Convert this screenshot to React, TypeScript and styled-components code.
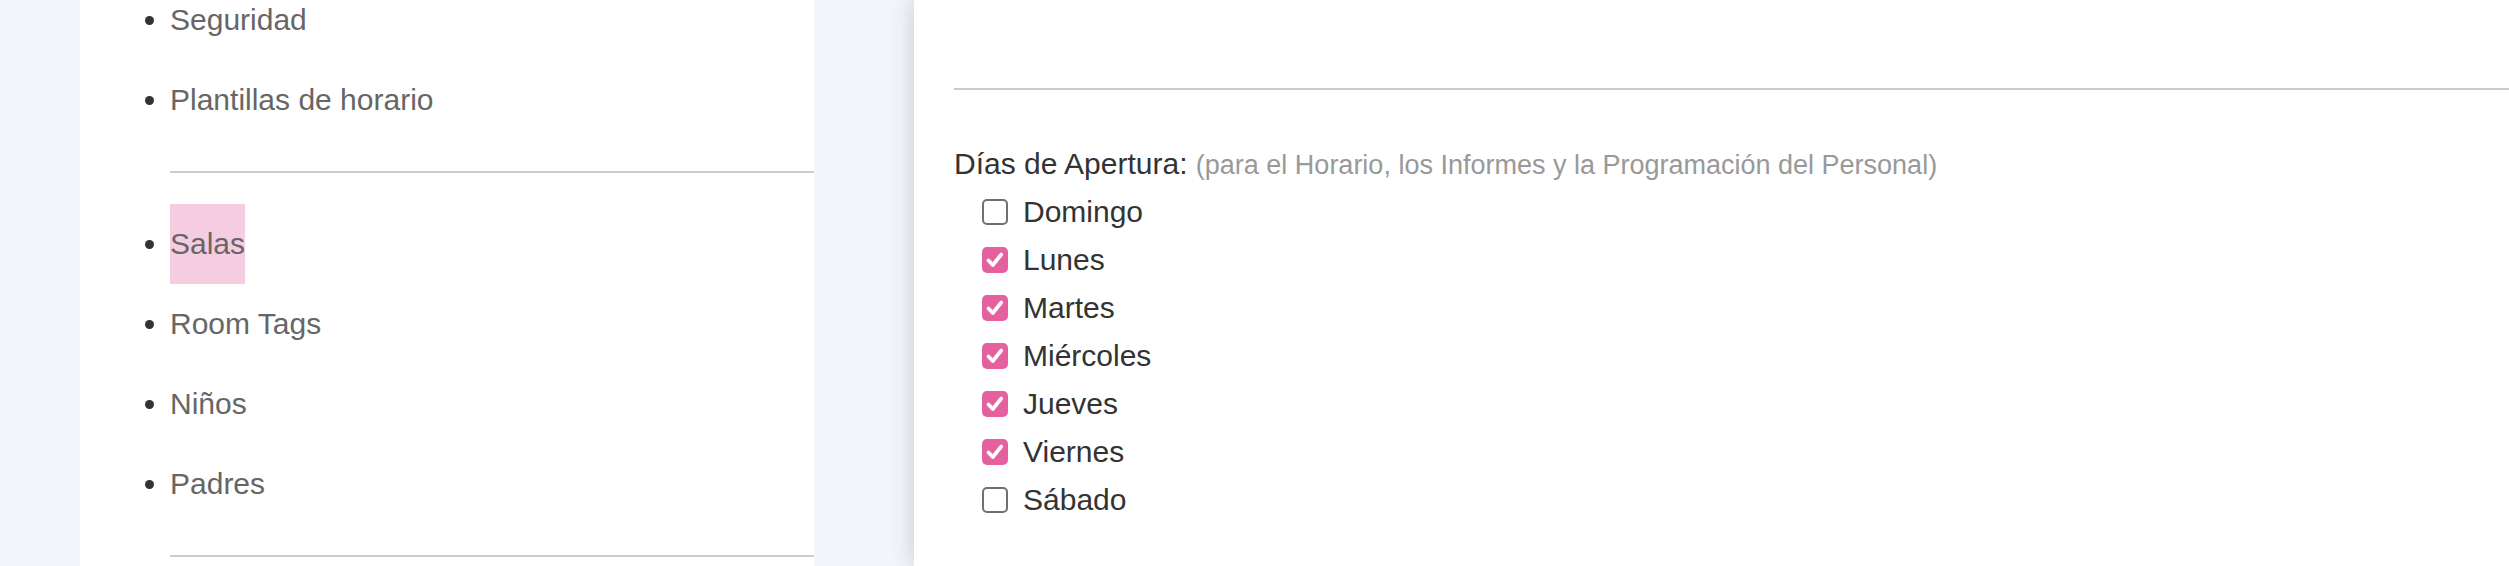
import React from "react";
import styled, { createGlobalStyle } from "styled-components";

const GlobalStyle = createGlobalStyle`
  html, body {
    margin: 0;
    padding: 0;
    background: #f4f5fa;
    font-family: "Liberation Sans", Arial, sans-serif;
  }
  * { box-sizing: border-box; }
`;

const Page = styled.div`
  display: flex;
  height: 566px;
  overflow: hidden;
  background: #f4f5fa;
`;

const LeftPanel = styled.nav`
  margin-left: 80px;
  width: 734px;
  flex: 0 0 734px;
  background: #ffffff;
  overflow: hidden;
`;

const MenuList = styled.ul`
  list-style: none;
  margin: -20px 0 0 0;
  padding: 0 0 0 65px;
`;

const MenuItem = styled.li`
  display: flex;
  align-items: stretch;
  height: 80px;
  font-size: 30px;
  color: #666666;

  &::before {
    content: "";
    align-self: center;
    width: 9px;
    height: 9px;
    border-radius: 50%;
    background: #333333;
    margin-right: 16px;
    flex: 0 0 9px;
  }
`;

const MenuLink = styled.a<{ $active?: boolean }>`
  display: flex;
  align-items: center;
  color: #666666;
  text-decoration: none;
  background: ${(p) => (p.$active ? "#f6cce1" : "transparent")};
`;

const MenuDivider = styled.li`
  list-style: none;
  height: 2px;
  background: #cccccc;
  margin: 31px 0 31px 25px;
`;

const Gap = styled.div`
  flex: 0 0 100px;
`;

const RightPanel = styled.main`
  flex: 1;
  min-width: 0;
  background: #ffffff;
  box-shadow: 0 0 22px rgba(40, 44, 60, 0.22);
  padding-left: 40px;
  position: relative;
`;

const TopSpace = styled.div`
  height: 88px;
`;

const Rule = styled.hr`
  margin: 0;
  border: none;
  height: 2px;
  background: #cccccc;
`;

const FieldTitle = styled.div`
  margin-top: 51px;
  line-height: 46px;
  font-size: 30px;
  color: #333333;
  white-space: nowrap;
`;

const FieldHint = styled.span`
  font-size: 27px;
  color: #999999;
`;

const DayList = styled.div`
  display: flex;
  flex-direction: column;
  padding-left: 28px;
`;

const DayRow = styled.label`
  display: flex;
  align-items: center;
  gap: 15px;
  height: 48px;
  font-size: 30px;
  color: #333333;
`;

const Box = styled.span<{ $checked: boolean }>`
  display: flex;
  align-items: center;
  justify-content: center;
  width: 26px;
  height: 26px;
  flex: 0 0 26px;
  border-radius: 5px;
  border: ${(p) => (p.$checked ? "none" : "2px solid #707070")};
  background: ${(p) => (p.$checked ? "#e5609e" : "#ffffff")};
`;

const CheckMark = () => (
  <svg width="26" height="26" viewBox="0 0 26 26" aria-hidden="true">
    <path
      d="M6.5 13.5 L10.8 18 L19.2 7.6"
      fill="none"
      stroke="#ffffff"
      strokeWidth="3.8"
      strokeLinecap="round"
      strokeLinejoin="round"
    />
  </svg>
);

const menuTop = ["Seguridad", "Plantillas de horario"];
const menuBottom = ["Salas", "Room Tags", "Niños", "Padres"];

const days: { name: string; checked: boolean }[] = [
  { name: "Domingo", checked: false },
  { name: "Lunes", checked: true },
  { name: "Martes", checked: true },
  { name: "Miércoles", checked: true },
  { name: "Jueves", checked: true },
  { name: "Viernes", checked: true },
  { name: "Sábado", checked: false },
];

export default function App() {
  return (
    <>
      <GlobalStyle />
      <Page>
        <LeftPanel>
          <MenuList>
            {menuTop.map((m) => (
              <MenuItem key={m}>
                <MenuLink href="#">{m}</MenuLink>
              </MenuItem>
            ))}
            <MenuDivider />
            {menuBottom.map((m) => (
              <MenuItem key={m}>
                <MenuLink href="#" $active={m === "Salas"}>
                  {m}
                </MenuLink>
              </MenuItem>
            ))}
            <MenuDivider />
          </MenuList>
        </LeftPanel>
        <Gap />
        <RightPanel>
          <TopSpace />
          <Rule />
          <FieldTitle>
            Días de Apertura:{" "}
            <FieldHint>
              (para el Horario, los Informes y la Programación del Personal)
            </FieldHint>
          </FieldTitle>
          <DayList>
            {days.map((d) => (
              <DayRow key={d.name}>
                <Box $checked={d.checked} role="checkbox" aria-checked={d.checked}>
                  {d.checked && <CheckMark />}
                </Box>
                {d.name}
              </DayRow>
            ))}
          </DayList>
        </RightPanel>
      </Page>
    </>
  );
}
